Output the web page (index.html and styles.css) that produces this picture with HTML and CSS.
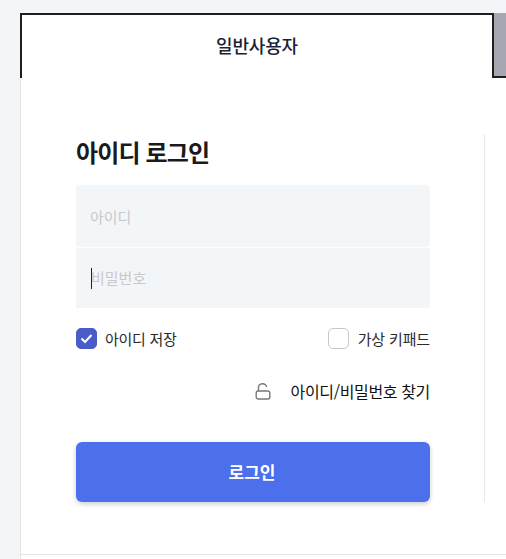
FILE: index.html
```html
<!DOCTYPE html>
<html lang="ko">
<head>
    <title>아이디 로그인</title>
    <link rel="stylesheet" href="styles.css">
</head>
<body>
    <div class="wrap">
        <div class="tabs">
            <div class="tab tab-active">일반사용자</div>
            <div class="tab tab-other"></div>
        </div>
        <div class="panel">
            <div class="panel-body">
                <form class="login">
                    <h2 class="login-title">아이디 로그인</h2>
                    <div class="field field-id"><input type="text" placeholder="아이디"></div>
                    <div class="field field-pw"><input type="password" placeholder="비밀번호"></div>
                    <div class="options">
                        <label class="check">
                            <span class="box box-on">
                                <svg width="13" height="11" viewBox="0 0 13 11"><path d="M1.5 5.5l3.5 3.5L11.5 2" fill="none" stroke="#fff" stroke-width="2"/></svg>
                            </span>
                            아이디 저장
                        </label>
                        <label class="check check-keypad">
                            <span class="box"></span>
                            가상 키패드
                        </label>
                    </div>
                    <div class="find">
                        <svg class="lock" width="16" height="17" viewBox="0 0 16 17"><path d="M3.5 8V4.5a4 3.5 0 0 1 8-.5" fill="none" stroke="#777" stroke-width="1.4"/><rect x="1.2" y="8" width="13.6" height="8" rx="2" fill="none" stroke="#777" stroke-width="1.4"/></svg>
                        <a class="find-link">아이디/비밀번호 찾기</a>
                    </div>
                    <button type="button" class="login-btn">로그인</button>
                </form>
                <div class="side"></div>
            </div>
        </div>
    </div>
</body>
</html>
```

FILE: styles.css
```css
* {
    box-sizing: border-box;
}
html, body {
    height: 100%;
}
body {
    margin: 0;
    padding: 13px 0 0 20px;
    background-color: #f3f6f9;
    font-family: "Noto Sans CJK KR", "Noto Sans", sans-serif;
    overflow: hidden;
}
.tabs {
    display: flex;
    height: 65px;
}
.tab-active {
    width: 474px;
    border: 2px solid #1e1e1e;
    border-bottom: 0;
    background-color: #fff;
    color: #1a1f36;
    font-size: 18px;
    font-weight: 500;
    letter-spacing: -0.2px;
    line-height: 61px;
    text-align: center;
}
.tab-other {
    flex: 1;
    background-color: #a7a7b1;
    border-bottom: 2px solid #1e1e1e;
}
.panel {
    height: 481px;
    background-color: #fff;
    border-left: 1px solid #e5e5e5;
}
.panel-body {
    display: flex;
    height: 477px;
    padding: 56px 0 52px 55px;
    border-bottom: 1px solid #e5e5e5;
}
.login {
    width: 354px;
}
.login-title {
    margin: 0 0 15px;
    color: #1a1a1a;
    font-size: 24px;
    font-weight: 700;
    letter-spacing: -0.85px;
    line-height: 36px;
}
.field {
    position: relative;
    background-color: #f3f6f9;
}
.field-id {
    height: 62px;
    margin-bottom: 1px;
    border-radius: 4px;
}
.field-pw {
    height: 60px;
}
.field-pw::before {
    content: "";
    position: absolute;
    left: 15px;
    top: 20px;
    width: 1px;
    height: 21px;
    background-color: #222;
}
.field input {
    width: 100%;
    height: 100%;
    padding: 0 15px;
    border: 0;
    outline: 0;
    background: none;
    font-family: inherit;
    font-size: 15px;
}
.field-id input {
    padding-left: 14px;
}
.field-pw input {
    padding-bottom: 2px;
}
.field input::placeholder {
    color: #c8c8c8;
}
.options {
    display: flex;
    justify-content: space-between;
    margin-top: 20px;
}
.check {
    display: flex;
    align-items: center;
    gap: 8px;
    color: #2a2a2a;
    font-size: 15px;
    letter-spacing: -0.3px;
    line-height: 21px;
}
.check-keypad {
    gap: 9px;
    letter-spacing: -0.15px;
}
.box {
    display: flex;
    align-items: center;
    justify-content: center;
    width: 21px;
    height: 21px;
    background-color: #fff;
    border: 1px solid #c8c8c8;
    border-radius: 5px;
}
.box-on {
    background-color: #4a5cc9;
    border-color: #4a5cc9;
}
.find {
    display: flex;
    align-items: center;
    justify-content: flex-end;
    gap: 20px;
    margin-top: 30px;
}
.find-link {
    color: #111;
    font-size: 16px;
    letter-spacing: -0.35px;
    line-height: 24px;
}
.login-btn {
    display: block;
    width: 100%;
    height: 60px;
    margin-top: 39px;
    border: 0;
    border-radius: 6px;
    background-color: #4c6fec;
    box-shadow: 0 2px 5px rgba(0, 0, 0, 0.2);
    color: #fff;
    font-family: inherit;
    font-size: 17px;
    font-weight: 700;
    padding: 0 2px 2px 0;
}
.side {
    width: 1px;
    margin-left: 54px;
    background-color: #e8e8e8;
}
```
